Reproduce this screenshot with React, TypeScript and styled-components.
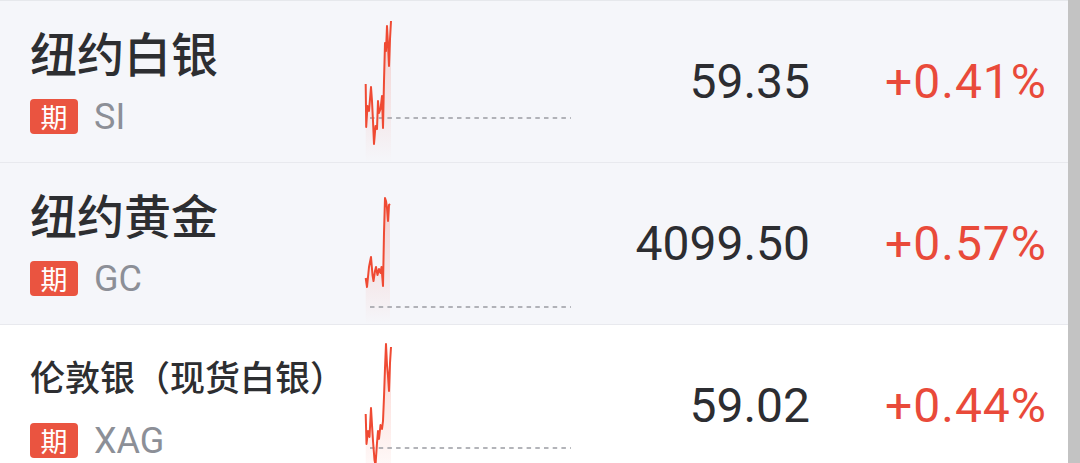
import React from "react";
import styled, { createGlobalStyle } from "styled-components";

const Global = createGlobalStyle`
  html, body { margin: 0; padding: 0; background: #ffffff; }
  body { width: 1080px; height: 463px; overflow: hidden; font-family: Roboto, "Noto Sans CJK SC", sans-serif; }
`;

const Page = styled.div`
  display: flex;
  width: 1080px;
  height: 463px;
  overflow: hidden;
`;

const List = styled.div`
  flex: 1;
  display: flex;
  flex-direction: column;
  border-top: 1px solid #e6e8ec;
`;

const Scrollbar = styled.div`
  width: 12px;
  background: #c3c3c3;
`;

const Row = styled.div<{ $white?: boolean }>`
  display: grid;
  grid-template-columns: 360px 215px 1fr 237px;
  align-items: center;
  height: 161px;
  flex-shrink: 0;
  padding-right: 21px;
  background: ${(p) => (p.$white ? "#ffffff" : "#f5f6fa")};
  border-bottom: 1px solid #e8e9ee;
`;

const NameCol = styled.div`
  align-self: start;
  display: flex;
  flex-direction: column;
  gap: 19px;
  padding: 23px 0 0 30px;
`;

const Name = styled.div<{ $small?: boolean }>`
  height: 56px;
  line-height: 56px;
  font-family: "Noto Sans CJK SC", sans-serif;
  font-weight: 500;
  font-size: ${(p) => (p.$small ? "35px" : "47px")};
  color: #2d2e31;
  white-space: nowrap;
`;

const CodeLine = styled.div`
  display: flex;
  align-items: center;
  gap: 16px;
  height: 35px;
`;

const Badge = styled.span`
  display: flex;
  align-items: center;
  justify-content: center;
  width: 48px;
  height: 35px;
  border-radius: 4px;
  background: #ea5440;
  color: #ffffff;
  font-family: "Noto Sans CJK SC", sans-serif;
  font-size: 27px;
  line-height: 1;
`;

const Code = styled.span`
  font-family: Roboto, sans-serif;
  font-size: 36px;
  color: #8c8f97;
  line-height: 1;
`;

const ChartBox = styled.div`
  align-self: stretch;
  height: 161px;
`;

const Price = styled.div`
  text-align: right;
  font-family: Roboto, sans-serif;
  font-size: 48px;
  color: #2c2d31;
  line-height: 1;
`;

const Change = styled.div`
  text-align: right;
  font-family: Roboto, sans-serif;
  font-size: 48px;
  letter-spacing: 1px;
  color: #e94a3a;
  line-height: 1;
`;

type Item = {
  name: string;
  code: string;
  price: string;
  change: string;
  points: [number, number][];
  base: number;
  white?: boolean;
  small?: boolean;
};

const items: Item[] = [
  {
    name: "纽约白银",
    code: "SI",
    price: "59.35",
    change: "+0.41%",
    base: 117,
    points: [
      [365.7, 83], [366.2, 126], [367.5, 105], [369, 110], [371, 86], [372, 100],
      [373, 120], [374, 143], [375.5, 125], [377, 128], [378, 100], [379, 112],
      [380.5, 108], [382, 95], [383, 127], [384, 80], [385, 42], [386, 50],
      [387, 25], [388, 43], [389, 65], [390, 38], [391, 20],
    ],
  },
  {
    name: "纽约黄金",
    code: "GC",
    price: "4099.50",
    change: "+0.57%",
    base: 144,
    points: [
      [365.7, 115], [367, 124], [369, 104], [371, 94], [372.5, 112], [373.5, 118],
      [375, 108], [376, 104], [377.5, 112], [379, 106], [380.5, 110], [381.5, 104],
      [383, 123], [384, 70], [385, 35], [386, 38], [387, 45], [388, 58], [389, 42], [390, 41],
    ],
  },
  {
    name: "伦敦银（现货白银）",
    code: "XAG",
    price: "59.02",
    change: "+0.44%",
    white: true,
    small: true,
    base: 123,
    points: [
      [365.7, 89], [366.5, 119], [368, 106], [369.5, 112], [371, 83], [372, 100],
      [373, 116], [374.5, 135], [375.5, 140], [377, 118], [378, 106], [379, 114],
      [380.5, 100], [382, 104], [383, 96], [384, 72], [385, 43], [386, 19],
      [387, 40], [388, 51], [389, 66], [390, 38], [391, 22],
    ],
  },
];

const Spark: React.FC<{ points: [number, number][]; base: number; id: string }> = ({ points, base, id }) => {
  const pts = points.map(([x, y]) => [x - 360, y] as [number, number]);
  const line = pts.map(([x, y], i) => `${i ? "L" : "M"}${x.toFixed(1)} ${y}`).join(" ");
  const first = pts[0];
  const last = pts[pts.length - 1];
  const area = `${line} L${last[0].toFixed(1)} 161 L${first[0].toFixed(1)} 161 Z`;
  return (
    <svg width="215" height="161" viewBox="0 0 215 161">
      <defs>
        <linearGradient id={id} x1="0" y1="0" x2="0" y2="1">
          <stop offset="0" stopColor="#f0523e" stopOpacity="0.25" />
          <stop offset="1" stopColor="#f0523e" stopOpacity="0" />
        </linearGradient>
      </defs>
      <path d={area} fill={`url(#${id})`} />
      <line x1="10" y1={base} x2="211" y2={base} stroke="#9a9ca2" strokeWidth="1.3" strokeDasharray="4.5 4.2" />
      <path d={line} fill="none" stroke="#ef4a33" strokeWidth="2" strokeLinejoin="round" />
    </svg>
  );
};

export default function App() {
  return (
    <Page>
      <Global />
      <List>
        {items.map((it, i) => (
          <Row key={it.code} $white={it.white}>
            <NameCol>
              <Name $small={it.small}>{it.name}</Name>
              <CodeLine>
                <Badge>期</Badge>
                <Code>{it.code}</Code>
              </CodeLine>
            </NameCol>
            <ChartBox>
              <Spark points={it.points} base={it.base} id={`g${i}`} />
            </ChartBox>
            <Price>{it.price}</Price>
            <Change>{it.change}</Change>
          </Row>
        ))}
      </List>
      <Scrollbar />
    </Page>
  );
}
